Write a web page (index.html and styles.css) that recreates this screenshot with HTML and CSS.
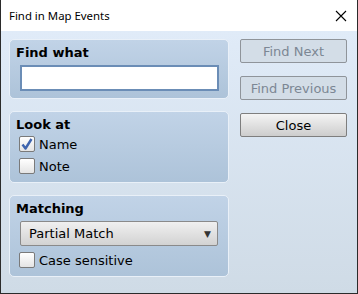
FILE: index.html
```html
<!DOCTYPE html>
<html lang="en">
  <head>
    <meta charset="UTF-8" />
    <title>Find in Map Events</title>
    <link rel="stylesheet" href="styles.css">
  </head>
  <body>
    <div class="window">
      <div class="titlebar">
        <span class="title">Find in Map Events</span>
        <span class="close-x">
          <svg width="12" height="12" viewBox="0 0 12 12"><path d="M1 1 L11 11 M11 1 L1 11" stroke="#000" stroke-width="1.1" fill="none"/></svg>
        </span>
      </div>
      <div class="content">
        <div class="left">
          <div class="panel panel-find">
            <div class="panel-title">Find what</div>
            <input type="text" class="text-input" />
          </div>
          <div class="panel panel-look">
            <div class="panel-title">Look at</div>
            <div class="check-row">
              <span class="checkbox">
                <svg width="14" height="14" viewBox="0 0 14 14"><path d="M2.5 7.5 L5.5 11.5 L11.5 2" stroke="#3e64ae" stroke-width="2.4" fill="none" stroke-linejoin="round"/></svg>
              </span>
              <span class="check-label">Name</span>
            </div>
            <div class="check-row">
              <span class="checkbox"></span>
              <span class="check-label">Note</span>
            </div>
          </div>
          <div class="panel panel-match">
            <div class="panel-title">Matching</div>
            <div class="select">
              <span>Partial Match</span>
              <span class="arrow">&#9660;</span>
            </div>
            <div class="check-row">
              <span class="checkbox"></span>
              <span class="check-label">Case sensitive</span>
            </div>
          </div>
        </div>
        <div class="right">
          <div class="button disabled">Find Next</div>
          <div class="button disabled">Find Previous</div>
          <div class="button">Close</div>
        </div>
      </div>
    </div>
  </body>
</html>
```

FILE: styles.css
```css
body {
  margin: 0;
  font-family: "DejaVu Sans", Verdana, sans-serif;
}
.window {
  width: 356px;
  height: 293px;
  border: 1px solid #2b2b2b;
  border-top: none;
  display: flex;
  flex-direction: column;
  overflow: hidden;
}
.titlebar {
  height: 31px;
  background: #fff;
  display: flex;
  align-items: center;
  justify-content: space-between;
  padding: 0 10px 0 8px;
}
.title {
  font-family: "Noto Sans", sans-serif;
  font-size: 11.4px;
  color: #000;
}
.close-x {
  display: flex;
}
.content {
  flex: 1;
  background: linear-gradient(#e0ebf8, #cfdbe6);
  display: flex;
  padding: 8px 9px 0 8px;
  gap: 11px;
}
.left {
  width: 220px;
  display: flex;
  flex-direction: column;
  gap: 12px;
}
.panel {
  box-sizing: border-box;
  border: 1px solid #e9f0f8;
  border-radius: 5px;
  background: linear-gradient(#c1d3e7, #adc3d9);
  padding: 5px 10px 0 6px;
}
.panel-find {
  height: 60px;
}
.panel-look {
  height: 72px;
}
.panel-match {
  height: 82px;
}
.panel-title {
  font-weight: bold;
  font-size: 13px;
  line-height: 15px;
  color: #000;
}
.text-input {
  display: block;
  box-sizing: border-box;
  width: 199px;
  height: 26px;
  margin: 5px 0 0 4px;
  border: 2px solid #6b8db6;
  background: #fff;
  padding: 0;
}
.check-row {
  display: flex;
  align-items: center;
  gap: 4px;
  margin: 2px 0 0 3px;
  height: 20px;
}
.panel-look .check-row:first-of-type {
  margin-top: 3px;
}
.checkbox {
  box-sizing: border-box;
  width: 16px;
  height: 16px;
  border: 1px solid #7a7a7a;
  border-radius: 2px;
  background: linear-gradient(#ffffff, #e4e4e4);
  display: flex;
  align-items: center;
  justify-content: center;
}
.check-label {
  font-size: 13px;
  color: #000;
}
.select {
  box-sizing: border-box;
  width: 198px;
  height: 25px;
  margin: 5px 0 0 4px;
  border: 1px solid #8a8a8a;
  border-radius: 2px;
  background: linear-gradient(#f0f0f0, #d2d2d2);
  display: flex;
  align-items: center;
  justify-content: space-between;
  padding: 0 6px 0 8px;
  font-size: 13px;
  color: #000;
}
.arrow {
  font-size: 9px;
  color: #333;
}
.panel-match .check-row {
  margin-top: 4px;
}
.right {
  width: 107px;
  display: flex;
  flex-direction: column;
  gap: 13px;
}
.button {
  box-sizing: border-box;
  height: 24px;
  border: 1px solid #7e7e7e;
  border-radius: 2px;
  background: linear-gradient(#f4f4f4, #cdcdcd);
  font-size: 13px;
  display: flex;
  align-items: center;
  justify-content: center;
  color: #000;
}
.button.disabled {
  background: #d3dde7;
  border-color: #8f949a;
  color: #7c8794;
}
```
